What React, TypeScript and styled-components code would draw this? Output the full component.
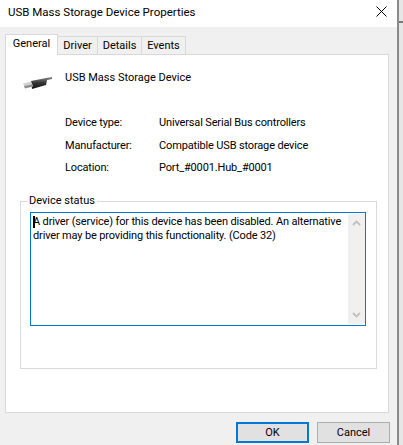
import React from "react";
import styled, { createGlobalStyle } from "styled-components";

const Global = createGlobalStyle`
  html, body { margin: 0; padding: 0; }
  body { width: 403px; height: 445px; overflow: hidden; background: #f0f0f0; font-family: Roboto, "Liberation Sans", Arial, sans-serif; }
`;

const Screen = styled.div`
  width: 403px;
  height: 445px;
  display: flex;
  background: #f0f0f0;
  overflow: hidden;
`;

const Dialog = styled.div`
  width: 399px;
  height: 445px;
  box-sizing: border-box;
  display: flex;
  flex-direction: column;
  background: #f0f0f0;
  border-right: 2px solid #8a8a8a;
  flex: none;
`;

const OutsideStrip = styled.div`
  flex: 1;
  background: #e6e6e6;
  padding-top: 21px;
`;

const OutsideLine = styled.div`
  height: 2px;
  background: #7a7a7a;
`;

const TitleBar = styled.div`
  height: 27px;
  flex: none;
  background: #fff;
  display: flex;
  align-items: center;
  justify-content: space-between;
  padding: 0 10px 4px 8px;
  box-sizing: border-box;
  font-size: 11.5px;
  color: #000;
`;

const Body = styled.div`
  flex: 1;
  padding: 7px 8px 0 5px;
  display: flex;
  flex-direction: column;
`;

const Tabs = styled.div`
  display: flex;
  align-items: flex-end;
  height: 21px;
  position: relative;
  z-index: 1;
  margin-bottom: -1px;
`;

const Tab = styled.div<{ $active?: boolean; $width: number }>`
  width: ${(p) => p.$width}px;
  height: ${(p) => (p.$active ? 21 : 19)}px;
  box-sizing: border-box;
  margin-right: -1px;
  border: 1px solid #d9d9d9;
  border-bottom: ${(p) => (p.$active ? "none" : "1px solid #d9d9d9")};
  background: ${(p) => (p.$active ? "#fff" : "#f0f0f0")};
  font-size: 11px;
  line-height: 18px;
  text-align: center;
  color: #000;
  position: relative;
  z-index: ${(p) => (p.$active ? 2 : 1)};
`;

const Panel = styled.div`
  width: 384px;
  height: 359px;
  box-sizing: border-box;
  background: #fff;
  border: 1px solid #d9d9d9;
  padding: 16px 10px 0 14px;
  display: flex;
  flex-direction: column;
`;

const Head = styled.div`
  display: flex;
  gap: 11px;
  height: 45px;
  font-size: 11px;
  line-height: 14px;
  flex: none;
`;

const IconSlot = styled.div`
  width: 32px;
  margin-left: 2px;
  padding-top: 5px;
`;

const Name = styled.div`
  color: #000;
`;

const Info = styled.div`
  display: grid;
  grid-template-columns: 94px 1fr;
  row-gap: 8.5px;
  margin-left: 45px;
  font-size: 11px;
  letter-spacing: -0.15px;
  line-height: 14px;
  color: #000;
`;

const Group = styled.fieldset`
  margin: 19px 0 0 0;
  padding: 0 10px 0 9px;
  width: 357px;
  height: 175px;
  box-sizing: border-box;
  border: 1px solid #d9d9d9;
  min-width: 0;
`;

const Legend = styled.legend`
  font-size: 11px;
  line-height: 14px;
  padding: 0 2px;
  margin-left: -3px;
  color: #000;
`;

const StatusBox = styled.div`
  height: 114px;
  box-sizing: border-box;
  border: 1px solid #0078d7;
  display: flex;
  margin-top: 4px;
`;

const StatusText = styled.div`
  flex: 1;
  font-size: 11px;
  letter-spacing: -0.15px;
  line-height: 14px;
  padding: 2px 2px;
  color: #000;
  position: relative;
`;

const Caret = styled.span`
  position: absolute;
  left: 2px;
  top: 3px;
  width: 2px;
  height: 12px;
  background: #000;
`;

const Scrollbar = styled.div`
  width: 17px;
  flex: none;
  margin: 1px 0 0 0;
  height: 110px;
  background: #f0f0f0;
  display: flex;
  flex-direction: column;
  justify-content: space-between;
  align-items: center;
  padding: 6px 0;
  box-sizing: border-box;
`;

const Footer = styled.div`
  display: flex;
  justify-content: flex-end;
  gap: 8px;
  padding-top: 9px;
  width: 385px;
`;

const Button = styled.button<{ $primary?: boolean }>`
  width: 73px;
  height: 21px;
  box-sizing: border-box;
  padding: 0;
  background: #e1e1e1;
  border: ${(p) => (p.$primary ? "2px solid #0078d7" : "1px solid #adadad")};
  font-family: inherit;
  font-size: 11px;
  color: #000;
`;

const Chevron = ({ up }: { up?: boolean }) => (
  <svg width="9" height="6" viewBox="0 0 9 6">
    <path d={up ? "M1 5 L4.5 1.5 L8 5" : "M1 1 L4.5 4.5 L8 1"} fill="none" stroke="#c0c0c0" strokeWidth="1.8" />
  </svg>
);

const UsbIcon = () => (
  <svg width="32" height="16" viewBox="0 0 32 16">
    <defs>
      <linearGradient id="plug" x1="0" y1="0" x2="0" y2="1">
        <stop offset="0" stopColor="#8a8a8a" />
        <stop offset="0.5" stopColor="#333" />
        <stop offset="1" stopColor="#151515" />
      </linearGradient>
    </defs>
    <path d="M9 5 L24 2 L30 1 L30 3 L25 4 L24 9 L10 13 Z" fill="url(#plug)" />
    <path d="M1 7.5 L9 5.5 L11 10 L3 12 Z" fill="#d0d0d0" />
    <path d="M2 10 L10 8.5 L11 10.5 L3 12.5 Z" fill="#8f8f8f" />
  </svg>
);

const Close = () => (
  <svg width="11" height="11" viewBox="0 0 11 11">
    <path d="M0.5 0.5 L10.5 10.5 M10.5 0.5 L0.5 10.5" stroke="#000" strokeWidth="1" fill="none" />
  </svg>
);

export default function App() {
  return (
    <Screen>
      <Global />
      <Dialog>
        <TitleBar>
          <span>USB Mass Storage Device Properties</span>
          <Close />
        </TitleBar>
        <Body>
          <Tabs>
            <Tab $active $width={53}>General</Tab>
            <Tab $width={41}>Driver</Tab>
            <Tab $width={45}>Details</Tab>
            <Tab $width={45}>Events</Tab>
          </Tabs>
          <Panel>
            <Head>
              <IconSlot><UsbIcon /></IconSlot>
              <Name>USB Mass Storage Device</Name>
            </Head>
            <Info>
              <span>Device type:</span><span>Universal Serial Bus controllers</span>
              <span>Manufacturer:</span><span>Compatible USB storage device</span>
              <span>Location:</span><span>Port_#0001.Hub_#0001</span>
            </Info>
            <Group>
              <Legend>Device status</Legend>
              <StatusBox>
                <StatusText>
                  <Caret />
                  A driver (service) for this device has been disabled. An alternative driver may be providing this functionality. (Code 32)
                </StatusText>
                <Scrollbar><Chevron up /><Chevron /></Scrollbar>
              </StatusBox>
            </Group>
          </Panel>
          <Footer>
            <Button $primary>OK</Button>
            <Button>Cancel</Button>
          </Footer>
        </Body>
      </Dialog>
      <OutsideStrip><OutsideLine /></OutsideStrip>
    </Screen>
  );
}
